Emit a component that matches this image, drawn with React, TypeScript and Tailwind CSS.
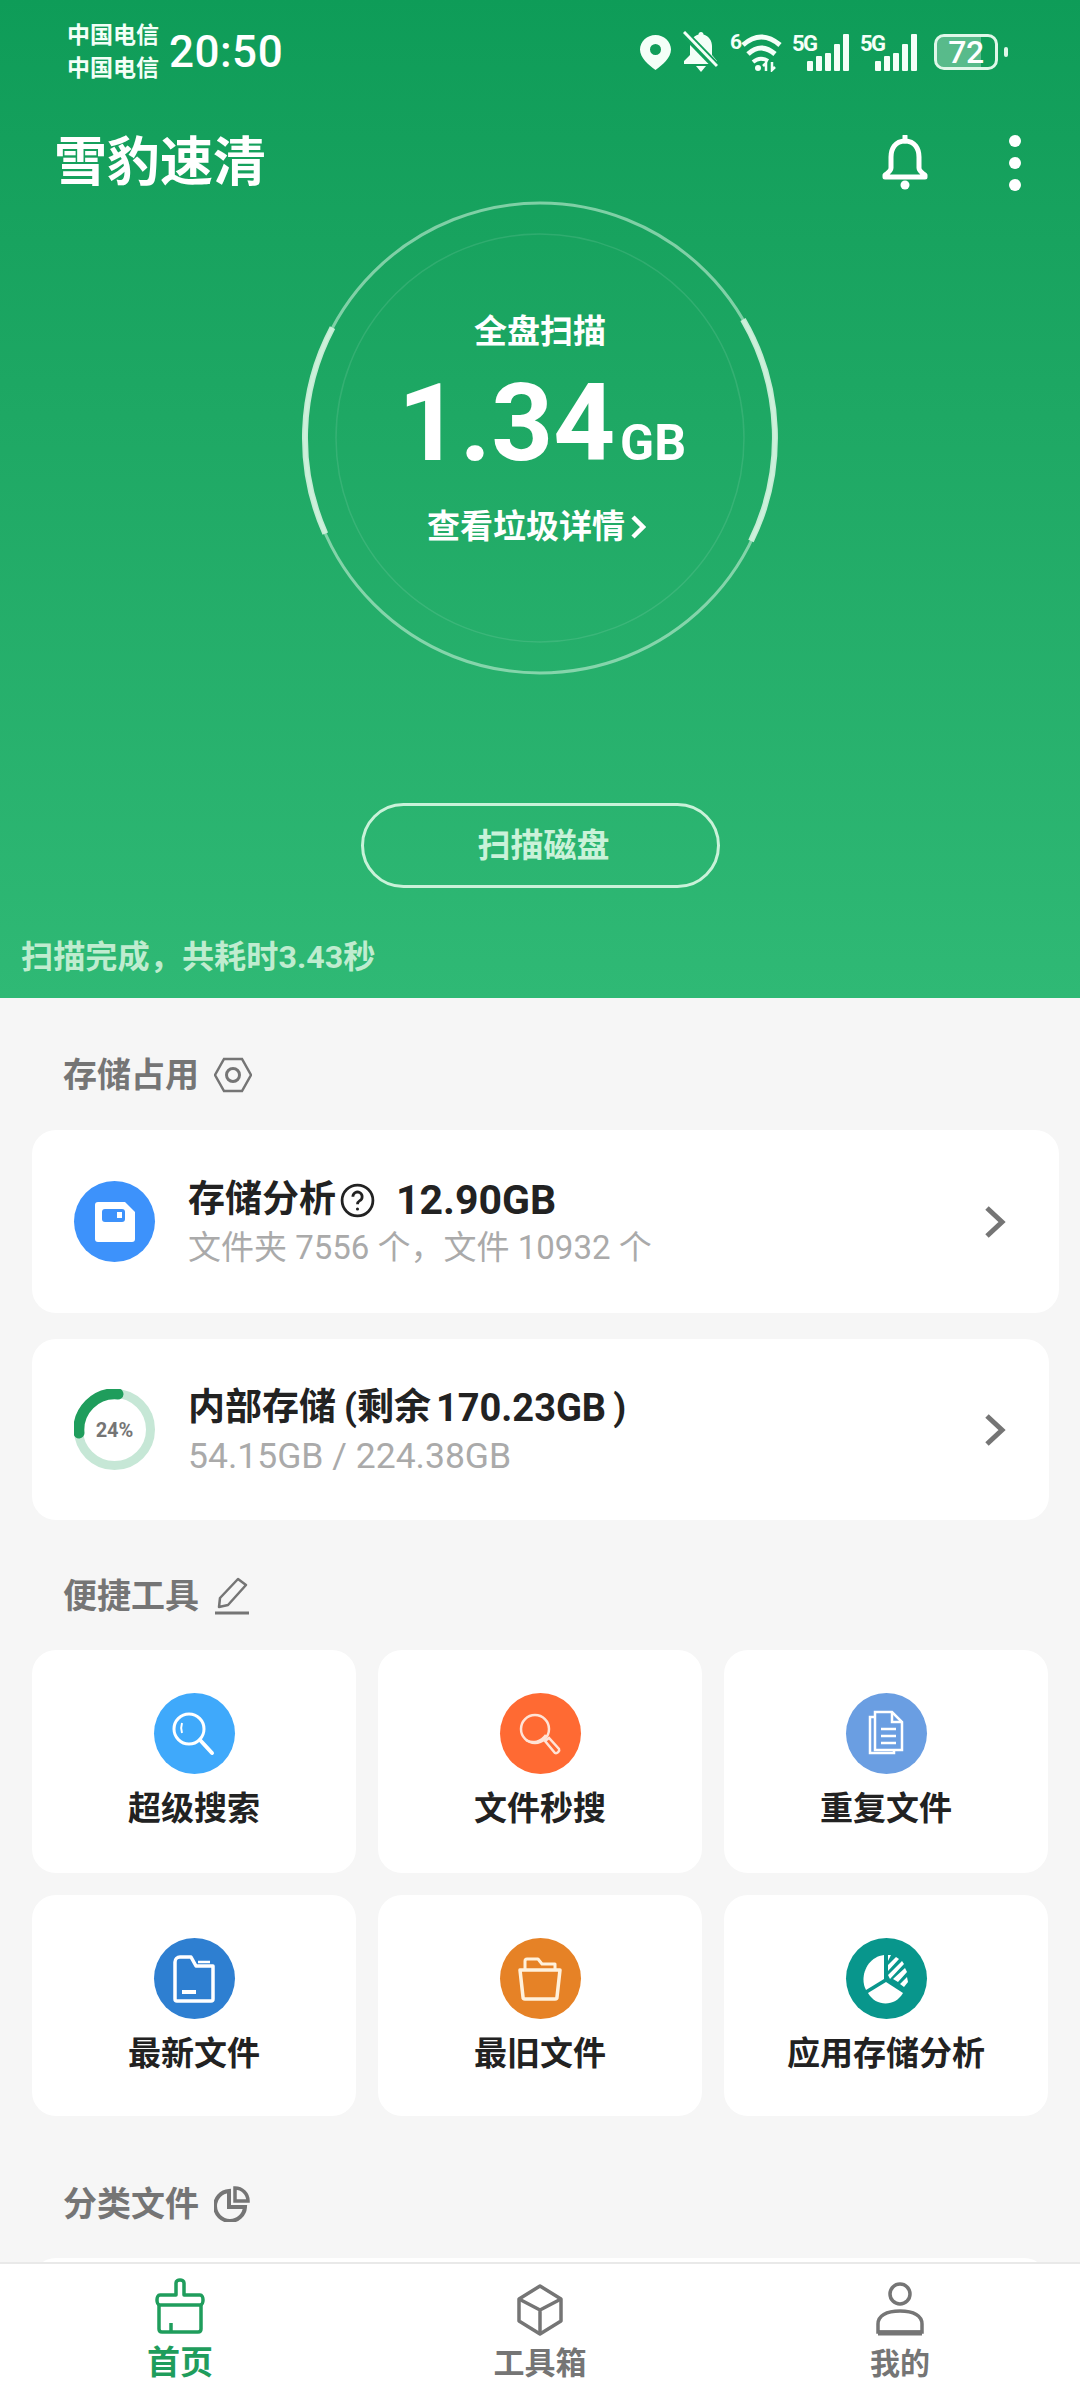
import type { ReactNode } from 'react';

const Location = () => (
  <svg width="31" height="35" viewBox="0 0 31 35">
    <path fillRule="evenodd" fill="#f4fff8" d="M15.5 0C7 0 0 6.600 0 14.600 0 23 8.500 30 15.500 35 22.500 30 31 23 31 14.600 31 6.600 24 0 15.500 0zm0 9a5.500 5.500 0 1 1 0 11 5.500 5.500 0 0 1 0-11z" />
  </svg>
);

const MutedBell = () => (
  <svg width="35" height="42" viewBox="0 0 35 42" fill="#f4fff8">
    <path d="M18 1c-1.500 0-2.500 1-2.500 2.500C10 5 7 10 7 15v9l-6 6v3h33v-3l-5-6V15c0-5-3-10-8.500-11.500C20.500 2 19.500 1 18 1z" />
    <path d="M13 35h10l-5 6z" />
    <path d="M1 2l33 34" stroke="#11a05b" strokeWidth="8" />
    <path d="M1 1l33 34" stroke="#f4fff8" strokeWidth="3" />
  </svg>
);

const Wifi = () => (
  <div className="relative w-[52px] h-[40px]">
    <span className="absolute left-0 top-[-2px] text-[21px] font-bold leading-[24px] text-[#f4fff8]">6</span>
    <svg className="absolute left-0 top-0" width="52" height="40" viewBox="0 0 52 40" fill="none" stroke="#f4fff8" strokeWidth="5">
      <path d="M13 13Q31 -3 50 13" />
      <path d="M18 22Q31 10 45 22" />
      <path d="M23 30Q30 24 38 29" strokeWidth="4" />
      <circle cx="28" cy="36" r="3" fill="#f4fff8" stroke="none" />
      <path d="M36 39v-8l-3 3M42 30v8l3-3" strokeWidth="2.500" />
    </svg>
  </div>
);

const Signal = () => (
  <div className="relative w-[57px] h-[38px]">
    <span className="absolute left-0 top-[-1px] text-[22px] font-bold leading-[24px] text-[#f4fff8] tracking-[-1.5px]">5G</span>
    <div className="absolute right-0 bottom-0 flex items-end gap-[3px]">
      {[10, 15, 18, 27, 37].map((h) => (
        <div key={h} className="w-[6px] rounded-[1px] bg-[#f4fff8]" style={{ height: h }} />
      ))}
    </div>
  </div>
);

const Battery = () => (
  <div className="flex items-center gap-[6px]">
    <div className="relative w-[64px] h-[36px] rounded-[10px] border-[3px] border-[#e0f7e9] flex items-center justify-center">
      <div className="absolute left-0 top-0 bottom-0 w-[76%] rounded-l-[7px] bg-white/30" />
      <span className="relative text-[32px] leading-[30px] font-medium text-white tracking-[-0.5px]">72</span>
    </div>
    <div className="w-[4px] h-[10px] rounded-[2px] bg-[#e0f7e9]" />
  </div>
);

const StatusBar = () => (
  <div className="h-[124px] pb-[20px] pl-[67px] pr-[72px] flex items-center text-white">
    <div className="w-[102px] font-bold text-[23px] leading-[33px] text-[#f2fff7]">
      <div>中国电信</div>
      <div>中国电信</div>
    </div>
    <div className="text-[44px] font-medium leading-none tracking-[0.5px]">20:50</div>
    <div className="ml-auto flex items-center">
      <Location />
      <div className="ml-[12px]"><MutedBell /></div>
      <div className="ml-[12px]"><Wifi /></div>
      <div className="ml-[10px]"><Signal /></div>
      <div className="ml-[11px]"><Signal /></div>
      <div className="ml-[17px]"><Battery /></div>
    </div>
  </div>
);

const ScanCircle = () => (
  <div className="relative w-[480px] h-[480px] mx-auto flex flex-col items-center text-white">
    <svg className="absolute inset-0" width="480" height="480" viewBox="0 0 480 480" fill="none">
      <circle cx="240" cy="240" r="235" stroke="#c5efd5" strokeOpacity="0.6" strokeWidth="3" />
      <circle cx="240" cy="240" r="204" stroke="#fff" strokeOpacity="0.1" strokeWidth="1.500" />
      <path d="M443 121.400A235 235 0 0 1 451 343" stroke="#d5f3e0" strokeOpacity="0.9" strokeWidth="6" />
      <path d="M32.500 129.700A235 235 0 0 0 25.300 335.600" stroke="#d5f3e0" strokeOpacity="0.9" strokeWidth="6" />
    </svg>
    <div className="relative mt-[114px] text-[33px] leading-[40px] font-bold">全盘扫描</div>
    <div className="relative mt-[16px] pl-[4px] h-[110px] flex items-baseline">
      <span className="text-[108px] leading-[110px] font-bold">1.34</span>
      <span className="ml-[5px] text-[50px] leading-none font-bold">GB</span>
    </div>
    <div className="relative mt-[29px] pr-[7px] flex items-center text-[33px] leading-[40px] font-bold">
      查看垃圾详情
      <svg className="ml-[5px]" width="16" height="26" viewBox="0 0 16 26" fill="none" stroke="#fff" strokeWidth="4.500">
        <path d="M3 3l10 10L3 23" />
      </svg>
    </div>
  </div>
);

const Hero = () => (
  <div className="h-[998px] shrink-0 bg-gradient-to-b from-[#0e9c58] to-[#2fb975]">
    <StatusBar />
    <div className="h-[74px] pt-[4px] pl-[54px] pr-[59px] flex items-center">
      <div className="text-[53px] leading-none font-bold text-white">雪豹速清</div>
      <svg className="ml-auto" width="50" height="56" viewBox="0 0 50 56" fill="none" stroke="#fff" strokeWidth="5">
        <path d="M25 6C15 6 11 14 11 22v11c0 3-3 5-6 7v2h40v-2c-3-2-6-4-6-7V22c0-8-4-16-14-16z" strokeLinejoin="round" />
        <path d="M25 1v5" strokeLinecap="round" />
        <circle cx="25" cy="50" r="4.500" fill="#fff" stroke="none" />
      </svg>
      <div className="ml-[79px] flex flex-col gap-[10px]">
        <div className="w-[12px] h-[12px] rounded-full bg-white" />
        <div className="w-[12px] h-[12px] rounded-full bg-white" />
        <div className="w-[12px] h-[12px] rounded-full bg-white" />
      </div>
    </div>
    <ScanCircle />
    <div className="mt-[125px] ml-[361px] w-[359px] h-[85px] pl-[6px] rounded-full border-[3px] border-[#c9f2d9] flex items-center justify-center text-[33px] font-bold text-[#c9f2d9]">
      扫描磁盘
    </div>
    <div className="mt-[49px] ml-[21px] text-[32.2px] leading-[40px] font-bold text-[#bfeccf]">
      扫描完成，共耗时3.43秒
    </div>
  </div>
);

const SectionTitle = ({ title, icon }: { title: string; icon: ReactNode }) => (
  <div className="ml-[63px] h-[40px] flex items-center gap-[15px] text-[34px] leading-[40px] font-bold text-[#757575]">
    {title}
    {icon}
  </div>
);

const CardChevron = () => (
  <svg width="24" height="34" viewBox="0 0 24 34" fill="none" stroke="#757575" strokeWidth="5">
    <path d="M4 3l15 14L4 31" />
  </svg>
);

const RowCard = ({ icon, title, sub, subClass, widthClass, endClass }: { icon: ReactNode; title: ReactNode; sub: string; subClass: string; widthClass: string; endClass: string }) => (
  <div className={`${widthClass} ml-[32px] bg-white rounded-[24px] flex items-center pl-[42px]`}>
    {icon}
    <div className="ml-[33px] flex-1 pt-[3px]">
      <div className="flex items-center text-[37px] leading-[46px] font-bold text-[#222222]">{title}</div>
      <div className={`${subClass} mt-[4px] leading-[42px] text-[#aaaaaa]`}>{sub}</div>
    </div>
    <div className={endClass}>
      <CardChevron />
    </div>
  </div>
);

const ToolCard = ({ bg, label, children }: { bg: string; label: string; children: ReactNode }) => (
  <div className="bg-white rounded-[24px] flex flex-col items-center pt-[43px]">
    <div className={`${bg} w-[81px] h-[81px] rounded-full flex items-center justify-center`}>{children}</div>
    <div className="mt-[14px] text-[33px] leading-[42px] font-bold text-[#222222]">{label}</div>
  </div>
);

const StorageRing = () => (
  <div className="relative w-[81px] h-[81px] flex items-center justify-center">
    <svg className="absolute inset-0" width="81" height="81" viewBox="0 0 81 81" fill="none">
      <circle cx="40.500" cy="40.500" r="36" stroke="#c6e7d6" strokeWidth="9" />
      <path d="M5 44A36 36 0 0 1 44 5" stroke="#1f9d5c" strokeWidth="11" strokeLinecap="round" />
    </svg>
    <span className="relative text-[20px] font-bold text-[#757575]">24%</span>
  </div>
);

const stroke = { fill: 'none', stroke: '#fff', strokeWidth: 3 };

const tools = [
  {
    bg: 'bg-[#3fa9fb]',
    label: '超级搜索',
    icon: (
      <svg width="50" height="50" viewBox="0 0 50 50" {...stroke}>
        <circle cx="20" cy="20" r="15" />
        <path d="M31 31l12 13" strokeWidth="4" strokeLinecap="round" />
        <path d="M13 14c-1 3-1 7 0 10" strokeWidth="2" />
      </svg>
    ),
  },
  {
    bg: 'bg-[#ff6a33]',
    label: '文件秒搜',
    icon: (
      <svg width="50" height="50" viewBox="0 0 50 50" {...stroke} stroke="#ffe3d6" strokeWidth="2.500">
        <circle cx="20" cy="20" r="14" />
        <path d="M11 31c7 4 15 2 20-5" />
        <path d="M30 32l4-3 10 11c1 2-2 5-4 4z" />
      </svg>
    ),
  },
  {
    bg: 'bg-[#6a9ee2]',
    label: '重复文件',
    icon: (
      <svg width="44" height="50" viewBox="0 0 44 50" {...stroke} strokeWidth="2.500">
        <path d="M10 8H6v36h24v-3" />
        <path d="M11 3h17l10 10v28H11z" fill="#6a9ee2" />
        <path d="M28 3v10h10" />
        <path d="M17 20h15M17 27h15M17 34h15" />
      </svg>
    ),
  },
  {
    bg: 'bg-[#2e7fd1]',
    label: '最新文件',
    icon: (
      <svg width="44" height="50" viewBox="0 0 44 50" {...stroke} strokeWidth="3.500" strokeLinejoin="round">
        <path d="M3 8a5 5 0 0 1 5-5h11l5 9h17v33a2 2 0 0 1-2 2H5a2 2 0 0 1-2-2z" />
        <path d="M26 8h12" strokeWidth="2.500" />
        <path d="M10 38h14" strokeWidth="4" />
      </svg>
    ),
  },
  {
    bg: 'bg-[#e68226]',
    label: '最旧文件',
    icon: (
      <svg width="46" height="46" viewBox="0 0 46 46" stroke="#fff1dc" fill="none" strokeWidth="3.500" strokeLinejoin="round">
        <path d="M8 13V5a2 2 0 0 1 2-2h11l4 5h13v5" strokeWidth="3" />
        <path d="M3 14h40l-3 27a2 2 0 0 1-2 2H8a2 2 0 0 1-2-2z" />
      </svg>
    ),
  },
  {
    bg: 'bg-[#08968c]',
    label: '应用存储分析',
    icon: (
      <svg width="48" height="52" viewBox="0 0 48 52" fill="#fff">
        <path d="M22 2v24L4 37C-3 24 5 4 22 2z" />
        <path d="M6 40l18-11 17 11c-8 14-27 14-35 0z" />
        <path d="M26 2l3 0-3 6zM26 12l8-8 3 2-11 12zM26 22l14-14 2 3-14 15zM31 26l12-11 2 4-9 10zM38 31l7-7 1 5-4 5z" />
      </svg>
    ),
  },
];

const TabBar = () => (
  <div className="h-[138px] shrink-0 bg-white border-t-[2px] border-[#e9e9e9] grid grid-cols-3">
    <div className="flex flex-col items-center pt-[14px] text-[#1f9d5c]">
      <svg width="52" height="56" viewBox="0 0 52 56" fill="none" stroke="#1f9d5c" strokeWidth="3.500" strokeLinejoin="round">
        <path d="M22 17V5c0-4 8-4 8 0v12h16c4 0 4 10 0 10H6c-4 0-4-10 0-10z" />
        <path d="M5 27v24c0 2 1 3 3 3h36c2 0 3-1 3-3V27" />
        <path d="M17 54v-9" />
      </svg>
      <div className="mt-[9px] text-[33px] leading-[40px] font-bold">首页</div>
    </div>
    <div className="flex flex-col items-center pt-[20px] text-[#757575]">
      <svg width="46" height="52" viewBox="0 0 46 52" fill="none" stroke="#757575" strokeWidth="3.500" strokeLinejoin="round">
        <path d="M23 2l21 13v22L23 50 2 37V15z" />
        <path d="M2 15l21 11 21-11M23 26v24" />
      </svg>
      <div className="mt-[9px] text-[31px] leading-[38px] font-bold">工具箱</div>
    </div>
    <div className="flex flex-col items-center pt-[18px] text-[#757575]">
      <svg width="48" height="54" viewBox="0 0 48 54" fill="none" stroke="#757575" strokeWidth="3.500">
        <circle cx="24" cy="12" r="10" />
        <path d="M2 50V42c0-8 8-13 22-13s22 5 22 13v8z" />
        <path d="M2 51h44" strokeWidth="5" />
      </svg>
      <div className="mt-[10px] text-[30px] leading-[36px] font-bold">我的</div>
    </div>
  </div>
);

export default function App() {
  return (
    <div className="w-[1080px] h-[2400px] flex flex-col overflow-hidden bg-[#f6f6f6] font-[Roboto,'Noto_Sans_CJK_SC',sans-serif]">
      <Hero />
      <div className="flex-1 min-h-0 overflow-hidden">
        <div className="mt-[57px]">
          <SectionTitle
            title="存储占用"
            icon={
              <svg width="38" height="36" viewBox="0 0 38 36" fill="none" stroke="#757575" strokeWidth="2.500">
                <path d="M10 2h18l9 16-9 16H10L1 18z" />
                <circle cx="19" cy="18" r="6.500" strokeWidth="3" />
              </svg>
            }
          />
        </div>
        <div className="mt-[35px] flex flex-col gap-[26px]">
          <div className="flex h-[183px]">
            <RowCard
              widthClass="w-[1027px]"
              endClass="mr-[52px]"
              subClass="text-[33px]"
              icon={
                <div className="w-[81px] h-[81px] rounded-full bg-[#3d92fb] flex items-center justify-center">
                  <svg width="40" height="40" viewBox="0 0 40 40">
                    <path fill="#fff" d="M3 0h27l10 10v27a3 3 0 0 1-3 3H3a3 3 0 0 1-3-3V3a3 3 0 0 1 3-3z" />
                    <rect x="7" y="7" width="23" height="13" rx="3" fill="#3d92fb" />
                    <rect x="22" y="10" width="5" height="6" fill="#fff" />
                  </svg>
                </div>
              }
              title={
                <>
                  存储分析
                  <svg className="ml-[3px]" width="37" height="37" viewBox="0 0 24 24" fill="none" stroke="#222222" strokeWidth="1.800">
                    <circle cx="12" cy="12" r="10" />
                    <path d="M9 9.500a3 3 0 1 1 4.500 2.600c-1 .6-1.500 1.300-1.500 2.400" />
                    <circle cx="12" cy="17.500" r="1" fill="#222222" stroke="none" />
                  </svg>
                  <span className="ml-[20px] text-[41px]">12.90GB</span>
                </>
              }
              sub="文件夹 7556 个，文件 10932 个"
            />
          </div>
          <div className="flex h-[181px]">
            <RowCard
              widthClass="w-[1017px]"
              endClass="mr-[42px]"
              subClass="text-[35.5px]"
              icon={<StorageRing />}
              title={
                <>
                  内部存储
                  <span className="ml-[8px]">(</span>
                  剩余
                  <span className="ml-[5px] text-[38px]">170.23GB</span>
                  <span className="ml-[7px]">)</span>
                </>
              }
              sub="54.15GB / 224.38GB"
            />
          </div>
        </div>
        <div className="mt-[56px]">
          <SectionTitle
            title="便捷工具"
            icon={
              <svg width="36" height="38" viewBox="0 0 36 38" fill="none" stroke="#757575" strokeWidth="2.500" strokeLinejoin="round">
                <path d="M24 2l8 6-18 20-9 2 1-9z" />
                <path d="M1 36h34" strokeWidth="3" />
              </svg>
            }
          />
        </div>
        <div className="mt-[34px] mx-[32px] w-[1016px] grid grid-cols-3 gap-x-[22px] gap-y-[22px] grid-rows-[223px_221px]">
          {tools.map((tool) => (
            <ToolCard key={tool.label} bg={tool.bg} label={tool.label}>
              {tool.icon}
            </ToolCard>
          ))}
        </div>
        <div className="mt-[68px]">
          <SectionTitle
            title="分类文件"
            icon={
              <svg width="36" height="36" viewBox="0 0 36 36" fill="none" stroke="#757575" strokeWidth="4">
                <path d="M15 5a15 15 0 1 0 16 16H15z" />
                <path d="M21 2v13h13A13 13 0 0 0 21 2z" strokeWidth="3.500" />
              </svg>
            }
          />
        </div>
        <div className="mt-[34px] mx-[32px] w-[1016px] h-[100px] rounded-[24px] bg-white" />
      </div>
      <TabBar />
    </div>
  );
}
